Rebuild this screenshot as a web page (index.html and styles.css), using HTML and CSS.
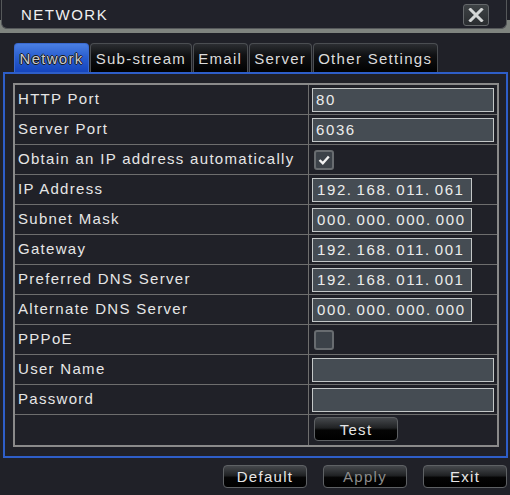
FILE: index.html
```html
<!DOCTYPE html>
<html>
<head>
<meta charset="utf-8">
<link rel="stylesheet" href="styles.css">
</head>
<body>
<div class="screen">
  <div class="header">
    <div class="titlebar">
      <span class="title">NETWORK</span>
      <button class="close" aria-label="Close">
        <svg width="16" height="14" viewBox="0 0 16 14"><path d="M2.5 1.5 L13.5 12.5 M13.5 1.5 L2.5 12.5" stroke="#d4d6d6" stroke-width="3" stroke-linecap="square"/></svg>
      </button>
    </div>
  </div>

  <div class="tabs">
    <div class="tab active">Network</div>
    <div class="tab">Sub-stream</div>
    <div class="tab">Email</div>
    <div class="tab">Server</div>
    <div class="tab">Other Settings</div>
  </div>

  <div class="panel">
    <div class="table">
      <div class="row"><div class="label">HTTP Port</div><div class="value"><div class="field wide">80</div></div></div>
      <div class="row"><div class="label">Server Port</div><div class="value"><div class="field wide">6036</div></div></div>
      <div class="row"><div class="label">Obtain an IP address automatically</div><div class="value"><div class="check on"><svg width="16" height="16" viewBox="0 0 16 16"><path d="M3.5 8 L6.8 11.2 L12.8 4.5" fill="none" stroke="#f2f2f2" stroke-width="2.4"/></svg></div></div></div>
      <div class="row"><div class="label">IP Address</div><div class="value"><div class="field ip">192<span class="dot">.</span>168<span class="dot">.</span>011<span class="dot">.</span>061</div></div></div>
      <div class="row"><div class="label">Subnet Mask</div><div class="value"><div class="field ip">000<span class="dot">.</span>000<span class="dot">.</span>000<span class="dot">.</span>000</div></div></div>
      <div class="row"><div class="label">Gateway</div><div class="value"><div class="field ip">192<span class="dot">.</span>168<span class="dot">.</span>011<span class="dot">.</span>001</div></div></div>
      <div class="row"><div class="label">Preferred DNS Server</div><div class="value"><div class="field ip">192<span class="dot">.</span>168<span class="dot">.</span>011<span class="dot">.</span>001</div></div></div>
      <div class="row"><div class="label">Alternate DNS Server</div><div class="value"><div class="field ip">000<span class="dot">.</span>000<span class="dot">.</span>000<span class="dot">.</span>000</div></div></div>
      <div class="row"><div class="label">PPPoE</div><div class="value"><div class="check"></div></div></div>
      <div class="row"><div class="label">User Name</div><div class="value"><div class="field wide"></div></div></div>
      <div class="row"><div class="label">Password</div><div class="value"><div class="field wide"></div></div></div>
      <div class="row last"><div class="label"></div><div class="value top"><button class="btn test">Test</button></div></div>
    </div>
  </div>

  <div class="actions">
    <button class="btn">Default</button>
    <button class="btn disabled">Apply</button>
    <button class="btn">Exit</button>
  </div>
</div>
</body>
</html>
```

FILE: styles.css
```css
html, body {
  margin: 0;
  padding: 0;
  background: #202128;
}
.screen {
  width: 510px;
  height: 495px;
  overflow: hidden;
  background: #202128;
  font-family: "Liberation Sans", Arial, sans-serif;
  font-size: 15px;
  letter-spacing: 1.3px;
  color: #e6e6e6;
}
.header {
  height: 33px;
  background: linear-gradient(to bottom, #202128 0, #202128 20px, #7f847f 20px, #7f847f 100%);
}
.titlebar {
  box-sizing: border-box;
  height: 29px;
  margin: 0 3px 0 1px;
  border: 1px solid #55585a;
  border-top: none;
  border-radius: 0 0 6px 6px;
  background: #21222a;
  display: flex;
  align-items: center;
  justify-content: space-between;
  padding: 0 17px 0 19px;
}
.title {
  letter-spacing: 1.5px;
  color: #f0f0f0;
  padding-top: 1px;
}
.close {
  box-sizing: border-box;
  width: 26px;
  height: 22px;
  margin-top: 2px;
  padding: 0;
  border: 1px solid #64676a;
  border-radius: 3px;
  background: linear-gradient(to bottom, #3e4245, #2a2d30);
  display: flex;
  align-items: center;
  justify-content: center;
}
.tabs {
  display: flex;
  gap: 1px;
  margin: 10px 0 0 14px;
  height: 29px;
}
.tab {
  box-sizing: border-box;
  height: 29px;
  padding: 4px 4.5px 0 4.5px;
  border: 1px solid #4b4e52;
  border-bottom: none;
  border-radius: 4px 4px 0 0;
  background: linear-gradient(to bottom, #2c2e32 0, #101113 40%, #000 100%);
  color: #dcdcdc;
  line-height: 22px;
  white-space: nowrap;
}
.tab.active {
  border-color: #3a6ad0;
  background: linear-gradient(to bottom, #4a7fe2 0, #2a5fd0 45%, #1545bd 100%);
  color: #c9cbcc;
  text-shadow: 1px 0 0 #1a1a1a, -1px 0 0 #1a1a1a, 0 1px 0 #1a1a1a, 0 -1px 0 #1a1a1a;
}
.panel {
  box-sizing: border-box;
  height: 386px;
  margin: 0 2px 0 3px;
  border: 2px solid #2e5ec8;
  padding: 9px 7px 9px 8px;
}
.table {
  box-sizing: border-box;
  width: 486px;
  border: 2px solid #8a8a8a;
}
.row {
  box-sizing: border-box;
  height: 30px;
  display: grid;
  grid-template-columns: 294px 1fr;
  border-bottom: 1px solid #6e6e6e;
}
.row.last {
  border-bottom: none;
}
.label {
  border-right: 1px solid #6e6e6e;
  padding-left: 3px;
  line-height: 27px;
  white-space: nowrap;
}
.value {
  display: flex;
  align-items: center;
  padding-left: 3px;
}
.value.top {
  align-items: flex-start;
  padding-top: 2px;
  padding-left: 5px;
}
.field {
  box-sizing: border-box;
  height: 24px;
  border: 1px solid #c3c7c7;
  background: #454c53;
  padding-left: 3px;
  line-height: 22px;
  letter-spacing: 1.6px;
  color: #ececec;
  white-space: nowrap;
}
.field.wide { width: 182px; }
.field.ip { width: 160px; padding-left: 4px; }
.dot { margin-right: 4px; }
.check {
  box-sizing: border-box;
  width: 20px;
  height: 20px;
  margin-left: 2px;
  border: 2px solid #686c70;
  border-radius: 3px;
  background: #3c4249;
  display: flex;
  align-items: center;
  justify-content: center;
}
.btn {
  box-sizing: border-box;
  width: 84px;
  height: 23px;
  padding: 0;
  border: 1px solid #5e6164;
  border-radius: 4px;
  background: linear-gradient(to bottom, #45484c 0, #202224 45%, #050505 55%, #000 100%);
  color: #e6e6e6;
  font-family: "Liberation Sans", Arial, sans-serif;
  font-size: 15px;
  letter-spacing: 1.3px;
  line-height: 21px;
  text-align: center;
}
.btn.test { height: 24px; }
.btn.disabled { color: #8c8c8c; }
.actions {
  display: flex;
  justify-content: flex-end;
  gap: 16px;
  margin-top: 7px;
  padding-right: 3px;
}
```
